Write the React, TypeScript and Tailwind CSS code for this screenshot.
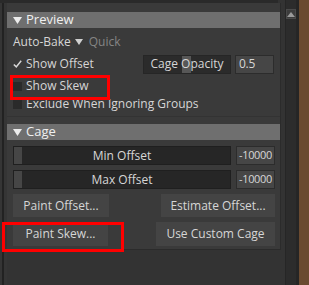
import React from 'react';

const font = { fontFamily: '"Open Sans", "Noto Sans", sans-serif' };

function Tri({ w, h, color }: { w: number; h: number; color: string }) {
  return (
    <svg width={w} height={h} viewBox={`0 0 ${w} ${h}`}>
      <path d={`M0 0 L${w} 0 L${w / 2} ${h} Z`} fill={color} />
    </svg>
  );
}

function Header({ label }: { label: string }) {
  return (
    <div className="flex items-center h-[16px] bg-[#6f6f6f] text-[#f0f0f0] text-[13px] pl-[6px]">
      <span className="mr-[4px] mt-[1px] flex">
        <Tri w={9} h={7} color="#ececec" />
      </span>
      <span>{label}</span>
    </div>
  );
}

function Check({ checked, label }: { checked?: boolean; label: string }) {
  return (
    <div className="flex items-center h-[18px] pl-[6px] text-[12px] text-[#d6d6d6]">
      <span className={`w-[9px] h-[9px] mr-[4px] flex items-center justify-center ${checked ? '' : 'bg-[#2a2a2a]'}`}>
        {checked && (
          <svg width="11" height="10" viewBox="0 0 11 10">
            <path d="M1 5.5 L4 8.5 L10 1" stroke="#d8d8d8" strokeWidth="1.8" fill="none" />
          </svg>
        )}
      </span>
      <span>{label}</span>
    </div>
  );
}

function Value({ v, center }: { v: string; center?: boolean }) {
  return (
    <div
      className={`w-[39px] h-[19px] bg-[#464646] border border-[#2c2c2c] flex items-center text-[11px] tracking-[-0.3px] text-[#d6d6d6] ${
        center ? 'justify-center' : 'pl-[3px] text-[12px]'
      }`}
    >
      {v}
    </div>
  );
}

function Slider({ label, value }: { label: string; value: string }) {
  return (
    <div className="flex h-[19px] pl-[6px] gap-[5px]">
      <div className="relative w-[218px] bg-[#262626] border border-[#1f1f1f] flex items-center justify-center text-[12px] text-[#d6d6d6]">
        <span className="absolute left-0 top-0 bottom-0 w-[8px] bg-[#464646]" />
        <span className="relative">{label}</span>
      </div>
      <Value v={value} center />
    </div>
  );
}

function Btn({ label, w }: { label: string; w: string }) {
  return (
    <div className={`${w} h-full bg-[#444444] flex items-center justify-center text-[12px] text-[#d6d6d6]`}>
      {label}
    </div>
  );
}

export default function App() {
  return (
    <div className="relative w-[309px] h-[285px] bg-[#333333] flex overflow-hidden" style={font}>
      <div className="w-[7px] h-full flex">
        <div className="w-[2px] bg-[#353535]" />
        <div className="w-[2px] bg-[#222222]" />
        <div className="w-[3px] bg-[#353535]" />
      </div>

      <div className="w-[274px] flex flex-col">
        <div className="h-[3px] bg-[#2a2a2a] -ml-[7px] w-[278px]" />
        <div className="h-[247px] bg-[#3a3a3a] border-r border-b border-[#2b2b2b] flex flex-col pt-[9px]">
          <Header label="Preview" />
          <div className="flex items-center h-[18px] mt-[5px] pl-[6px] text-[12px]">
            <span className="text-[#d6d6d6]">Auto-Bake</span>
            <span className="ml-[4px] mr-[6px] flex">
              <Tri w={8} h={6} color="#d0d0d0" />
            </span>
            <span className="text-[#858585]">Quick</span>
          </div>
          <div className="flex items-center h-[20px] mt-[3px]">
            <div className="w-[136px]">
              <Check checked label="Show Offset" />
            </div>
            <div className="relative w-[88px] h-[19px] bg-[#2b2b2b] border border-[#262626] flex items-center justify-center text-[12px] text-[#d6d6d6]">
              <span className="absolute left-[38px] top-0 bottom-0 w-[9px] bg-[#575757]" />
              <span className="relative">Cage Opacity</span>
            </div>
            <div className="ml-[4px]">
              <Value v="0.5" />
            </div>
          </div>
          <div className="mt-[3px]">
            <Check label="Show Skew" />
          </div>
          <Check label="Exclude When Ignoring Groups" />
          <div className="h-[3px] mt-[1px] border-b border-[#333333]" />
          <div className="mt-[7px]">
            <Header label="Cage" />
          </div>
          <div className="flex flex-col gap-[5px] mt-[6px]">
            <Slider label="Min Offset" value="-10000" />
            <Slider label="Max Offset" value="-10000" />
          </div>
          <div className="flex justify-between h-[23px] mt-[5px] pl-[6px] pr-[5px]">
            <Btn label="Paint Offset..." w="w-[96px]" />
            <Btn label="Estimate Offset..." w="w-[114px]" />
          </div>
          <div className="flex justify-between h-[24px] mt-[5px] pl-[6px] pr-[5px]">
            <Btn label="Paint Skew..." w="w-[95px]" />
            <Btn label="Use Custom Cage" w="w-[119px]" />
          </div>
        </div>
      </div>

      <div className="w-[4px]" />
      <div className="w-[12px] h-full bg-[#2c2c2c] border-x border-[#262626] flex flex-col items-center pt-[9px]">
        <div className="w-[10px] h-[10px] bg-[#3c3c3c] border border-[#4a4a4a] flex items-center justify-center">
          <svg width="8" height="5" viewBox="0 0 8 5">
            <path d="M0 5 L4 0 L8 5 Z" fill="#9a9a9a" />
          </svg>
        </div>
      </div>
      <div className="w-[2px] bg-[#252525]" />
      <div className="w-[10px] h-full bg-[#6a4a30]" />

      <div className="absolute left-[10px] top-[75px] w-[100px] h-[25px] border-[3px] border-[#ff0000]" />
      <div className="absolute left-[2px] top-[222px] w-[122px] h-[30px] border-[3px] border-[#ff0000]" />
    </div>
  );
}
